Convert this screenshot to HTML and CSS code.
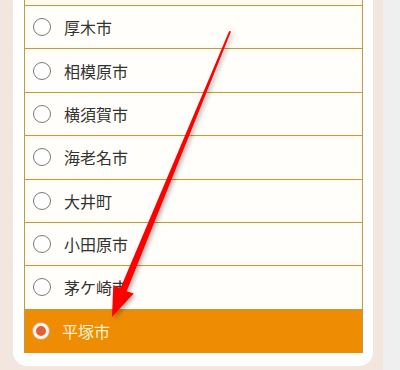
FILE: index.html
```html
<!DOCTYPE html>
<html lang="ja">
<head>
<meta charset="utf-8">
<link rel="stylesheet" href="styles.css">
</head>
<body>
<div class="page">
  <div class="card">
    <div class="list">
      <div class="row row-top"></div>
      <label class="row"><span class="radio"></span><span class="name">厚木市</span></label>
      <label class="row"><span class="radio"></span><span class="name">相模原市</span></label>
      <label class="row"><span class="radio"></span><span class="name">横須賀市</span></label>
      <label class="row"><span class="radio"></span><span class="name">海老名市</span></label>
      <label class="row"><span class="radio"></span><span class="name">大井町</span></label>
      <label class="row"><span class="radio"></span><span class="name">小田原市</span></label>
      <label class="row"><span class="radio"></span><span class="name">茅ケ崎市</span></label>
      <label class="row selected"><span class="radio"></span><span class="name">平塚市</span></label>
    </div>
  </div>
</div>
<svg class="arrow" width="400" height="370" viewBox="0 0 400 370">
  <defs>
    <filter id="sh" x="-20%" y="-20%" width="140%" height="140%">
      <feDropShadow dx="2" dy="2" stdDeviation="2" flood-color="#000" flood-opacity="0.3"/>
    </filter>
  </defs>
  <polygon filter="url(#sh)" fill="#ff0000" points="231,31.5 229.2,30.9 120.3,288.6 113.3,285.1 112,317 133.7,293.5 126.7,291.2"/>
</svg>
</body>
</html>
```
FILE: styles.css
```css
html, body {
  margin: 0;
  padding: 0;
}
body {
  background: #efefef;
  width: 400px;
  height: 370px;
  overflow: hidden;
  position: relative;
  font-family: "Noto Sans CJK JP", "Noto Sans", sans-serif;
}
.page {
  width: 360px;
  height: 370px;
  background: #f3e6de;
  padding: 0 10px 0 13px;
}
.card {
  background: #ffffff;
  height: 366px;
  border-radius: 0 0 14px 14px;
  padding: 0 10px 0 11px;
  box-sizing: border-box;
}
.list {
  border-left: 1px solid #b89c52;
  border-right: 1px solid #b89c52;
  display: flex;
  flex-direction: column;
}
.row {
  display: flex;
  align-items: center;
  height: 42.375px;
  border-bottom: 1px solid #b89c52;
  background: #fffefa;
  box-shadow: inset 0 0 4px rgba(255, 230, 150, 0.35);
}
.row-top {
  height: 5px;
}
.radio {
  width: 16px;
  height: 16px;
  border: 1.2px solid #7a7a7a;
  border-radius: 50%;
  background: #fff;
  margin-left: 8px;
  flex: none;
}
.name {
  margin-left: 13px;
  font-size: 16px;
  color: #333333;
  line-height: 1;
}
.row.selected {
  background: #ee8c04;
  border-bottom: none;
  height: 43.4px;
  box-shadow: none;
}
.row.selected .radio {
  width: 10px;
  height: 10px;
  border: 3.5px solid #fff6ee;
  background: #e0603a;
  box-shadow: 0 0 0 1px #e8a070;
}
.row.selected .name {
  color: #fff2cc;
}
.arrow {
  position: absolute;
  left: 0;
  top: 0;
}
```
